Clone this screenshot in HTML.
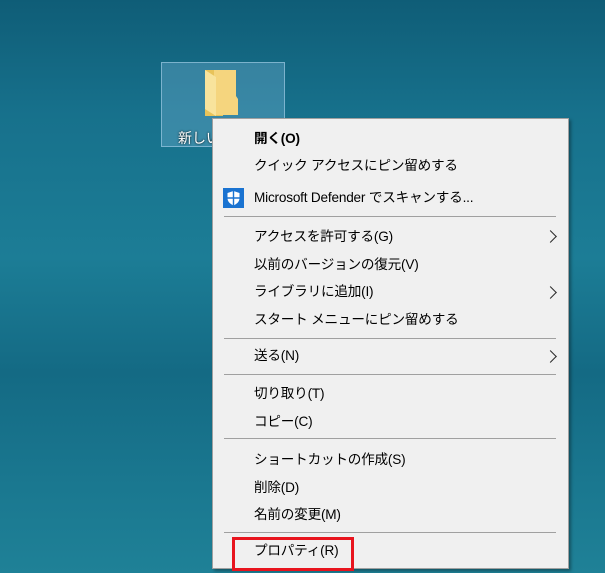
<!DOCTYPE html>
<html><head><meta charset="utf-8"><style>
body{margin:0;width:605px;height:573px;overflow:hidden;position:relative;
background:linear-gradient(180deg,#0f5d77 0%,#17718c 20%,#1c7d96 45%,#146a84 65%,#1a7890 85%,#1f8197 100%);
font-family:"Liberation Sans","Noto Sans CJK JP",sans-serif;}
.sel{position:absolute;left:161px;top:62px;width:122px;height:83px;background:rgba(120,180,215,.35);border:1px solid rgba(170,210,235,.6);}
.lbl{position:absolute;left:178px;top:128px;color:#fff;font-size:14px;text-shadow:0 0 2px #000;}
.menu{position:absolute;left:212px;top:118px;width:355px;height:449px;background:#f0f0f0;border:1px solid #a0a0a0;box-shadow:2px 2px 3px rgba(0,0,0,.35);}
.it{position:absolute;left:41px;font-size:13.6px;letter-spacing:-0.2px;color:#000;line-height:16px;white-space:nowrap;}
.sep{position:absolute;left:11px;width:332px;height:1px;background:#a0a0a0;}
.ar{position:absolute;left:333px;width:8px;height:8px;border-top:1.3px solid #2a2a2a;border-right:1.3px solid #2a2a2a;transform:rotate(45deg);}
.red{position:absolute;left:232px;top:537px;width:116px;height:28px;border:3px solid #e8141e;}
</style></head><body>
<div class="sel"></div>
<svg style="position:absolute;left:200px;top:68px" width="40" height="48" viewBox="0 0 40 48">
<path d="M5 2h18v46H5z" fill="#e8c35a"/>
<path d="M14 2h22v26l2 3v16H14z" fill="#f5d57e"/>
<path d="M5 2l11 7v39L5 41z" fill="#f8e39c"/>
</svg>
<div class="lbl">新しい</div>
<div class="menu">
<div class="it" style="top:12px;font-weight:bold">開く(O)</div>
<div class="it" style="top:39px">クイック アクセスにピン留めする</div>
<svg style="position:absolute;left:10px;top:69px" width="21" height="20" viewBox="0 0 21 20"><rect width="21" height="20" fill="#1a73d1"/><path d="M10.5 3l6 2v5c0 4-3 6-6 7.5C7.5 16 4.5 14 4.5 10V5z" fill="#fff"/><path d="M10.5 3v14.5M4.5 10h12" stroke="#1a73d1" stroke-width="1.4"/></svg>
<div class="it" style="top:71px">Microsoft Defender でスキャンする...</div>
<div class="sep" style="top:97px"></div>
<div class="it" style="top:110px">アクセスを許可する(G)</div><div class="ar" style="top:113px"></div>
<div class="it" style="top:138px">以前のバージョンの復元(V)</div>
<div class="it" style="top:165px">ライブラリに追加(I)</div><div class="ar" style="top:169px"></div>
<div class="it" style="top:193px">スタート メニューにピン留めする</div>
<div class="sep" style="top:219px"></div>
<div class="it" style="top:229px">送る(N)</div><div class="ar" style="top:233px"></div>
<div class="sep" style="top:255px"></div>
<div class="it" style="top:267px">切り取り(T)</div>
<div class="it" style="top:295px">コピー(C)</div>
<div class="sep" style="top:319px"></div>
<div class="it" style="top:333px">ショートカットの作成(S)</div>
<div class="it" style="top:361px">削除(D)</div>
<div class="it" style="top:388px">名前の変更(M)</div>
<div class="sep" style="top:413px"></div>
<div class="it" style="top:424px">プロパティ(R)</div>
</div>
<div class="red"></div>
</body></html>
